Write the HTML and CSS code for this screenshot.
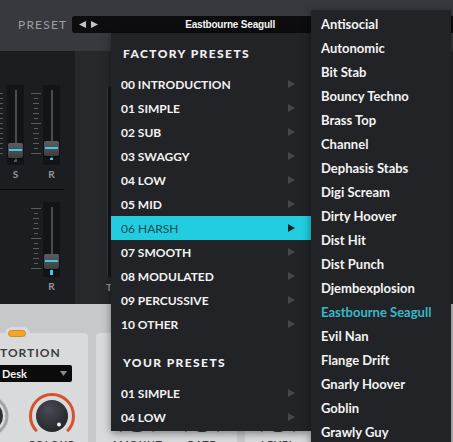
FILE: index.html
```html
<!DOCTYPE html>
<html lang="en">
<head>
<meta charset="utf-8">
<title>Preset menu</title>
<link rel="stylesheet" href="styles.css">
</head>
<body>
<div class="app">
  <header class="topbar">
    <span class="preset-label">PRESET</span>
    <div class="preset-box">
      <svg class="arrows" width="19" height="7" viewBox="0 0 19 7"><polygon points="0,3.5 7,0 7,7" fill="#c4c4c8"/><polygon points="12,0 19,3.5 12,7" fill="#c4c4c8"/></svg>
      <span class="preset-name">Eastbourne Seagull</span>
    </div>
  </header>

  <section class="mid">
    <div class="col-left">
      <div class="group g1">
        <div class="ticks ticks-a"><i class="l"></i><i class="s"></i><i class="m"></i><i class="s"></i><i class="m"></i><i class="s"></i><i class="l"></i><i class="s"></i><i class="m"></i><i class="s"></i><i class="m"></i><i class="s"></i><i class="l"></i></div>
        <div class="slider s1">
          <div class="slot slot-a"><div class="handle h1"></div><span class="pip pip-gray p1"></span></div>
          <span class="lbl">S</span>
        </div>
        <div class="ticks ticks-b"><i class="l"></i><i class="s"></i><i class="m"></i><i class="s"></i><i class="m"></i><i class="s"></i><i class="l"></i><i class="s"></i><i class="m"></i><i class="s"></i><i class="m"></i><i class="s"></i><i class="l"></i></div>
        <div class="slider s2">
          <div class="slot slot-a"><div class="handle h2"></div><span class="pip pip-cyan p2"></span></div>
          <span class="lbl">R</span>
        </div>
      </div>
      <div class="divider"></div>
      <div class="group g2">
        <div class="ticks ticks-c"><i class="l"></i><i class="s"></i><i class="m"></i><i class="s"></i><i class="m"></i><i class="s"></i><i class="l"></i><i class="s"></i><i class="m"></i><i class="s"></i><i class="m"></i><i class="s"></i><i class="l"></i></div>
        <div class="slider s3">
          <div class="slot slot-b"><div class="handle h3"></div><span class="pip pip-cyan p3"></span></div>
          <span class="lbl">R</span>
        </div>
      </div>
    </div>
    <div class="col-two">
      <div class="slider s4">
        <div class="slot slot-c"></div>
        <span class="lbl lbl-left">T</span>
      </div>
    </div>
  </section>

  <section class="lower">
    <div class="card card-one">
      <span class="tab"><span class="pill"></span></span>
      <div class="card-title">TORTION</div>
      <div class="dropdown"><span class="dd-text">Desk</span><svg width="7" height="5" viewBox="0 0 7 5"><polygon points="0,0 7,0 3.5,5" fill="#8c8c90"/></svg></div>
      <div class="knob-row">
        <div class="knob-unit ku-first">
          <svg width="46" height="46" viewBox="0 0 46 46"><circle cx="23" cy="23" r="19" fill="none" stroke="#a3a4a7" stroke-width="3"/><circle cx="23" cy="23" r="15" fill="#2e3036"/></svg>
        </div>
        <div class="knob-unit ku-colour">
          <svg width="46" height="46" viewBox="0 0 46 46"><defs><radialGradient id="kb" cx="40%" cy="30%" r="75%"><stop offset="0" stop-color="#474a53"/><stop offset="1" stop-color="#23252a"/></radialGradient></defs><path d="M 7.8 38.2 A 21.5 21.5 0 1 1 38.2 38.2" fill="none" stroke="#d4522e" stroke-width="3"/><circle cx="23" cy="23" r="16" fill="url(#kb)"/><circle cx="30" cy="31.5" r="2" fill="#f2f2f2"/></svg>
          <span class="knob-label">COLOUR</span>
        </div>
      </div>
    </div>
    <div class="card card-two">
      <div class="knob-row kr-low">
        <div class="knob-unit ku-amount">
          <svg width="46" height="46" viewBox="0 0 46 46"><path d="M 7.8 38.2 A 21.5 21.5 0 1 1 38.2 38.2" fill="none" stroke="#d4522e" stroke-width="3"/><circle cx="23" cy="23" r="16" fill="#2a2c32"/></svg>
          <span class="knob-label">AMOUNT</span>
        </div>
        <div class="knob-unit ku-rate">
          <svg width="46" height="46" viewBox="0 0 46 46"><path d="M 7.8 38.2 A 21.5 21.5 0 1 1 38.2 38.2" fill="none" stroke="#d4522e" stroke-width="3"/><circle cx="23" cy="23" r="16" fill="#2a2c32"/></svg>
          <span class="knob-label">RATE</span>
        </div>
      </div>
    </div>
    <div class="card card-three">
      <div class="knob-row kr-low">
        <div class="knob-unit ku-level">
          <svg width="46" height="46" viewBox="0 0 46 46"><path d="M 7.8 38.2 A 21.5 21.5 0 1 1 38.2 38.2" fill="none" stroke="#d4522e" stroke-width="3"/><circle cx="23" cy="23" r="16" fill="#2a2c32"/></svg>
          <span class="knob-label">LEVEL</span>
        </div>
      </div>
    </div>
  </section>

  <nav class="menu menu-main">
    <div class="menu-heading">FACTORY PRESETS</div>
    <ul class="menu-list">
      <li class="menu-item"><span>00 INTRODUCTION</span><svg class="chev" width="7" height="8" viewBox="0 0 7 8"><polygon points="0,0 7,4 0,8"/></svg></li>
      <li class="menu-item"><span>01 SIMPLE</span><svg class="chev" width="7" height="8" viewBox="0 0 7 8"><polygon points="0,0 7,4 0,8"/></svg></li>
      <li class="menu-item"><span>02 SUB</span><svg class="chev" width="7" height="8" viewBox="0 0 7 8"><polygon points="0,0 7,4 0,8"/></svg></li>
      <li class="menu-item"><span>03 SWAGGY</span><svg class="chev" width="7" height="8" viewBox="0 0 7 8"><polygon points="0,0 7,4 0,8"/></svg></li>
      <li class="menu-item"><span>04 LOW</span><svg class="chev" width="7" height="8" viewBox="0 0 7 8"><polygon points="0,0 7,4 0,8"/></svg></li>
      <li class="menu-item"><span>05 MID</span><svg class="chev" width="7" height="8" viewBox="0 0 7 8"><polygon points="0,0 7,4 0,8"/></svg></li>
      <li class="menu-item is-active"><span>06 HARSH</span><svg class="chev" width="7" height="8" viewBox="0 0 7 8"><polygon points="0,0 7,4 0,8"/></svg></li>
      <li class="menu-item"><span>07 SMOOTH</span><svg class="chev" width="7" height="8" viewBox="0 0 7 8"><polygon points="0,0 7,4 0,8"/></svg></li>
      <li class="menu-item"><span>08 MODULATED</span><svg class="chev" width="7" height="8" viewBox="0 0 7 8"><polygon points="0,0 7,4 0,8"/></svg></li>
      <li class="menu-item"><span>09 PERCUSSIVE</span><svg class="chev" width="7" height="8" viewBox="0 0 7 8"><polygon points="0,0 7,4 0,8"/></svg></li>
      <li class="menu-item"><span>10 OTHER</span><svg class="chev" width="7" height="8" viewBox="0 0 7 8"><polygon points="0,0 7,4 0,8"/></svg></li>
    </ul>
    <div class="menu-heading second">YOUR PRESETS</div>
    <ul class="menu-list">
      <li class="menu-item"><span>01 SIMPLE</span><svg class="chev" width="7" height="8" viewBox="0 0 7 8"><polygon points="0,0 7,4 0,8"/></svg></li>
      <li class="menu-item"><span>04 LOW</span><svg class="chev" width="7" height="8" viewBox="0 0 7 8"><polygon points="0,0 7,4 0,8"/></svg></li>
    </ul>
  </nav>

  <nav class="menu menu-sub">
    <ul class="sub-list">
      <li>Antisocial</li>
      <li>Autonomic</li>
      <li>Bit Stab</li>
      <li>Bouncy Techno</li>
      <li>Brass Top</li>
      <li>Channel</li>
      <li>Dephasis Stabs</li>
      <li>Digi Scream</li>
      <li>Dirty Hoover</li>
      <li>Dist Hit</li>
      <li>Dist Punch</li>
      <li>Djembexplosion</li>
      <li class="is-current">Eastbourne Seagull</li>
      <li>Evil Nan</li>
      <li>Flange Drift</li>
      <li>Gnarly Hoover</li>
      <li>Goblin</li>
      <li>Grawly Guy</li>
    </ul>
  </nav>
</div>
</body>
</html>
```

FILE: styles.css
```css
* { box-sizing: border-box; margin: 0; padding: 0; }

body {
  margin: 0;
  width: 453px;
  height: 442px;
  overflow: hidden;
  background: #2a2b2f;
  font-family: Lato, "Open Sans", sans-serif;
}

.app {
  position: relative;
  width: 453px;
  height: 442px;
  overflow: hidden;
  display: flex;
  flex-direction: column;
}

/* top bar */
.topbar {
  height: 51px;
  flex-shrink: 0;
  background: #38393e;
  display: flex;
  align-items: flex-start;
  padding: 16px 0 0 18px;
}
.preset-label {
  width: 57px;
  font-size: 12px;
  line-height: 17px;
  letter-spacing: 1.2px;
  color: #9d9ea3;
}
.preset-box {
  width: 400px;
  height: 17px;
  background: #0d0d0f;
  border-radius: 3px 0 0 3px;
  display: flex;
  align-items: center;
  padding-left: 7px;
}
.arrows { display: block; flex-shrink: 0; }
.preset-name {
  margin-left: 87px;
  font-family: "Liberation Sans", Arial, sans-serif;
  font-weight: bold;
  font-size: 10px;
  letter-spacing: -0.2px;
  color: #f4f4f4;
  white-space: nowrap;
}

/* middle dark panel */
.mid {
  height: 253px;
  flex-shrink: 0;
  display: flex;
}
.col-left {
  width: 75px;
  flex-shrink: 0;
  background: #1c1d21;
  display: flex;
  flex-direction: column;
}
.group { display: flex; align-items: flex-start; }
.g1 { height: 138px; padding-top: 34px; }
.g2 { flex: 1; padding-top: 12px; }
.divider { height: 1px; width: 64px; background: #09090a; }

.ticks {
  display: flex;
  flex-direction: column;
  align-items: center;
  gap: 4px;
}
.ticks i { display: block; height: 1px; background: #5a5b60; }
.ticks i.l { width: 10px; }
.ticks i.m { width: 6px; }
.ticks i.s { width: 4px; }
.ticks-a { width: 3px; overflow: hidden; margin-top: 8px; align-items: flex-end; }
.ticks-b { width: 10px; margin-left: 7px; margin-top: 8px; }
.ticks-c { width: 10px; margin-left: 31px; margin-top: 6px; }

.slider {
  display: flex;
  flex-direction: column;
  align-items: center;
  width: 17px;
}
.s1 { margin-left: 4px; }
.s2 { margin-left: 2px; }
.s3 { margin-left: 2px; }

.slot {
  position: relative;
  width: 17px;
  background: #131417;
  border-radius: 2px;
}
.slot::before {
  content: "";
  position: absolute;
  left: 7.5px;
  width: 2px;
  top: 5px;
  bottom: 5px;
  background: #4b4c51;
}
.slot-a { height: 80px; }
.slot-b { height: 75px; }

.handle {
  position: absolute;
  left: 1px;
  width: 15px;
  height: 15px;
  border-radius: 2px;
  background: linear-gradient(#5b5d62, #3c3e42);
  box-shadow: 0 1px 1px rgba(0,0,0,0.6);
}
.handle::after {
  content: "";
  position: absolute;
  left: 1px;
  right: 1px;
  top: 6px;
  height: 2px;
  background: #3fcbdb;
}
.h1 { top: 58px; }
.h2 { top: 56px; }
.h3 { top: 52px; }

.pip { position: absolute; left: 7px; width: 3px; }
.pip-gray { background: #55565b; height: 2px; }
.pip-cyan { background: #3fcbdb; }
.p1 { top: 75px; }
.p2 { top: 73px; height: 2px; }
.p3 { top: 68px; height: 5px; }

.lbl {
  margin-top: 3px;
  font-size: 10px;
  line-height: 12px;
  font-weight: bold;
  color: #97989d;
}

.col-two {
  flex: 1;
  background: #27282c;
  padding: 36px 0 0 32px;
}
.s4 { width: 30px; align-items: flex-start; }
.slot-c {
  width: 30px;
  height: 190px;
  background: #141518;
  border-left: 1px solid #3a3b40;
}
.slot-c::before { display: none; }
.lbl-left { margin-left: -1px; margin-top: 4px; }

/* lower light panel */
.lower {
  flex: 1;
  background: #c7c8ca;
  display: flex;
  gap: 8px;
  padding-top: 29px;
}
.card {
  position: relative;
  background: #d9dadc;
  border-radius: 4px 4px 0 0;
}
.card-one {
  margin-left: -40px;
  width: 128px;
  padding-left: 40px;
}
.card-two { width: 141px; padding-left: 18px; }
.card-three { width: 180px; padding-left: 10px; }

.tab {
  position: absolute;
  left: 45px;
  top: -6px;
  width: 25px;
  height: 7px;
  background: #d9dadc;
  border-radius: 7px 7px 0 0;
}
.pill {
  position: absolute;
  left: 3px;
  top: 3px;
  width: 18px;
  height: 7px;
  border-radius: 4px;
  background: #f4a52a;
  border: 1px solid #d48a1c;
}

.card-title {
  margin-top: 13px;
  font-size: 12px;
  line-height: 13px;
  font-weight: bold;
  letter-spacing: 1px;
  color: #3b3c41;
}
.dropdown {
  margin-top: 6px;
  width: 72px;
  height: 17px;
  background: #0b0b0c;
  border-radius: 0 2px 2px 0;
  display: flex;
  align-items: center;
  justify-content: space-between;
  padding: 0 5px 0 2px;
}
.dd-text {
  font-size: 11px;
  font-weight: bold;
  color: #f4f4f4;
}
.dropdown svg { display: block; }

.knob-row {
  margin-top: 11px;
  display: flex;
  align-items: flex-start;
}
.kr-low { margin-top: 60px; }
.knob-unit {
  display: flex;
  flex-direction: column;
  align-items: center;
  width: 46px;
}
.knob-unit svg { display: block; }
.ku-first { margin-left: -35px; }
.ku-colour { margin-left: 18px; }
.ku-rate { margin-left: 19px; }
.knob-label {
  margin-top: -1px;
  font-size: 10px;
  line-height: 12px;
  font-weight: bold;
  letter-spacing: 1px;
  color: #3b3c41;
}

/* menus (overlays) */
.menu {
  position: absolute;
  background: #222327;
  box-shadow: 0 2px 8px rgba(0,0,0,0.45);
}
.menu-main {
  left: 111px;
  top: 33px;
  width: 200px;
  height: 398px;
}
.menu-heading {
  height: 39px;
  padding: 14px 0 0 12px;
  font-size: 12px;
  line-height: 14px;
  font-weight: 900;
  letter-spacing: 1.4px;
  color: #f0f0f0;
}
.menu-heading.second { margin-top: 6px; }
.menu-list { list-style: none; }
.menu-item {
  height: 24px;
  display: flex;
  align-items: center;
  justify-content: space-between;
  padding: 0 16px 0 10px;
  font-size: 12px;
  font-weight: bold;
  color: #f2f2f2;
}
.chev { display: block; fill: #46474c; }
.menu-item.is-active { background: #22cde0; color: #1b4b54; font-weight: normal; }
.menu-item.is-active .chev { fill: #0f2429; }

.menu-sub {
  left: 311px;
  top: 10px;
  width: 140px;
  height: 440px;
  padding-top: 2px;
}
.sub-list { list-style: none; }
.sub-list li {
  height: 24px;
  line-height: 24px;
  padding-left: 10px;
  font-size: 13px;
  font-weight: bold;
  color: #f3f3f3;
  white-space: nowrap;
}
.sub-list li.is-current { color: #38b9c9; }
```
